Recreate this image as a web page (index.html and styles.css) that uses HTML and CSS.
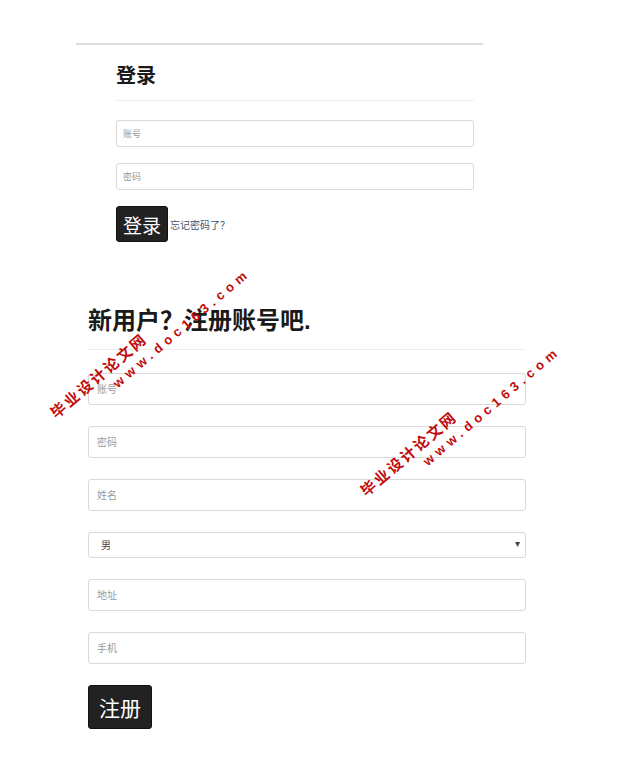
FILE: index.html
```html
<!DOCTYPE html>
<html lang="zh">
<head>
<meta charset="utf-8">
<title>登录 / 注册</title>
<link rel="stylesheet" href="styles.css">
</head>
<body>
<div class="page">
  <section class="login-wrap">
    <div class="login">
      <h2 class="login-title">登录</h2>
      <form class="login-form">
        <input class="field small" type="text" placeholder="账号">
        <input class="field small" type="password" placeholder="密码">
        <div class="login-actions">
          <button type="button" class="btn btn-login">登录</button>
          <a class="forgot" href="#">忘记密码了？</a>
        </div>
      </form>
    </div>
  </section>

  <section class="register">
    <h2 class="reg-title">新用户？注册账号吧.</h2>
    <form class="reg-form">
      <input class="field big" type="text" placeholder="账号">
      <input class="field big" type="password" placeholder="密码">
      <input class="field big" type="text" placeholder="姓名">
      <div class="select-wrap">
        <select class="field select">
          <option>男</option>
          <option>女</option>
        </select>
        <span class="arrow">▾</span>
      </div>
      <input class="field big" type="text" placeholder="地址">
      <input class="field big" type="text" placeholder="手机">
      <div>
        <button type="button" class="btn btn-reg">注册</button>
      </div>
    </form>
  </section>

  <div class="wm wm1">
    <span class="wm-cn">毕业设计论文网</span>
    <span class="wm-en">www.doc163.com</span>
  </div>
  <div class="wm wm2">
    <span class="wm-cn">毕业设计论文网</span>
    <span class="wm-en">www.doc163.com</span>
  </div>
</div>
</body>
</html>
```

FILE: styles.css
```css
* { box-sizing: border-box; }

html, body {
  margin: 0;
  padding: 0;
  background: #fff;
}

body {
  font-family: "Liberation Sans", "Noto Sans CJK SC", sans-serif;
  color: #222;
}

.page {
  position: relative;
  width: 623px;
  min-height: 778px;
  padding-top: 43px;
}

.login-wrap {
  margin-left: 76px;
  width: 407px;
  border-top: 2px solid #dcdcdc;
}

.login {
  padding: 0 9px 0 40px;
}

.login-title {
  margin: 17px 0 0;
  font-size: 20px;
  line-height: 28px;
  font-weight: bold;
  color: #1a1a1a;
  padding-bottom: 10px;
  border-bottom: 1px solid #eeeeee;
}

.login-form {
  display: flex;
  flex-direction: column;
  gap: 16px;
  margin-top: 19px;
}

.field {
  display: block;
  width: 100%;
  border: 1px solid #d9d9d9;
  border-radius: 3px;
  background: #fff;
  font-family: "Liberation Sans", "Noto Sans CJK SC", sans-serif;
  color: #555;
  outline: none;
}

.field::placeholder { color: #9a9a9a; }

.field.small {
  height: 27px;
  padding: 0 6px;
  font-size: 9px;
}

.login-actions {
  display: flex;
  align-items: center;
  gap: 2px;
}

.btn {
  border: 1px solid #111;
  background: #222;
  color: #fff;
  border-radius: 3px;
  font-family: "Liberation Sans", "Noto Sans CJK SC", sans-serif;
  padding: 0;
  cursor: pointer;
}

.btn-login {
  width: 52px;
  height: 36px;
  font-size: 19px;
}

.forgot {
  font-size: 10px;
  color: #3a5672;
  text-decoration: none;
}

.register {
  margin: 62px 0 0 88px;
  width: 438px;
}

.reg-title {
  margin: 0;
  font-size: 24px;
  line-height: 34px;
  font-weight: bold;
  color: #1a1a1a;
  padding-bottom: 11px;
  border-bottom: 1px solid #eeeeee;
}

.reg-form {
  display: flex;
  flex-direction: column;
  gap: 21px;
  margin-top: 23px;
}

.field.big {
  height: 32px;
  padding: 0 8px;
  font-size: 10px;
}

.select-wrap {
  position: relative;
}

.field.select {
  height: 26px;
  padding: 0 12px;
  font-size: 10px;
  color: #444;
  -webkit-appearance: none;
  appearance: none;
}

.arrow {
  position: absolute;
  right: 6px;
  top: 6px;
  font-size: 10px;
  line-height: 12px;
  color: #444;
  pointer-events: none;
}

.btn-reg {
  width: 64px;
  height: 44px;
  font-size: 21px;
}

/* watermarks */
.wm {
  position: absolute;
  width: 0;
  height: 0;
}

.wm1 { left: 57px; top: 420px; }
.wm2 { left: 367px; top: 498px; }

.wm span {
  position: absolute;
  white-space: nowrap;
  color: #c00d0d;
  font-weight: bold;
  transform-origin: 0 100%;
  transform: rotate(-40.5deg);
}

.wm-cn {
  left: 0;
  bottom: 0;
  font-size: 15px;
  line-height: 15px;
  letter-spacing: 2.3px;
  font-family: "Noto Sans CJK SC", sans-serif;
}

.wm-en {
  left: 62px;
  bottom: 30px;
  font-size: 13px;
  line-height: 12px;
  letter-spacing: 4.8px;
  font-family: "Liberation Sans", sans-serif;
}
```
